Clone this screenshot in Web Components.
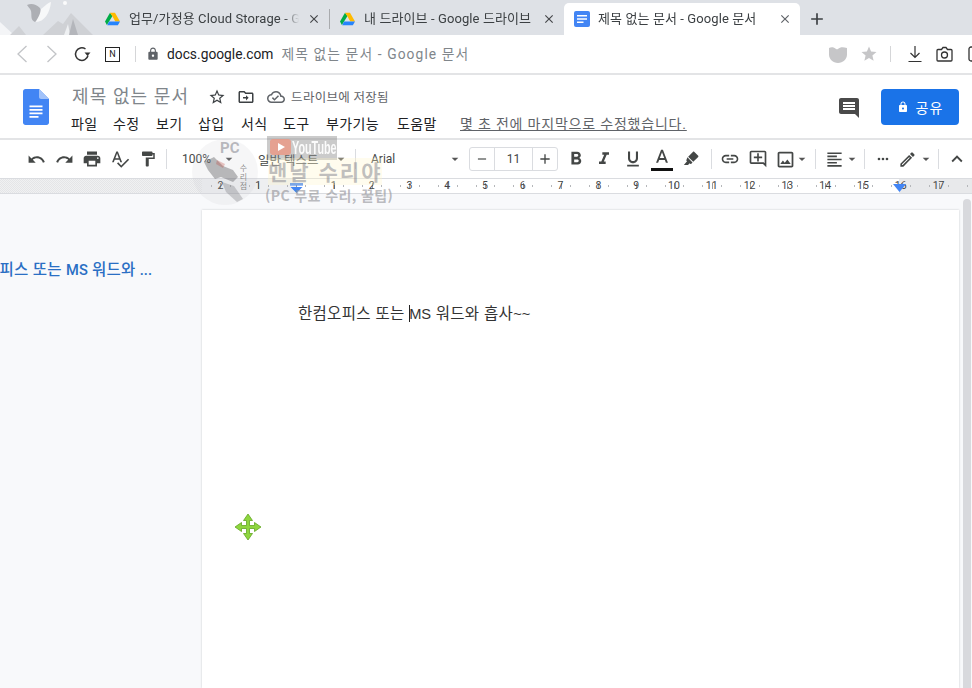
<!DOCTYPE html>
<html lang="ko">
<head>
<meta charset="utf-8">
<title>제목 없는 문서 - Google 문서</title>
<style>
  html, body { margin: 0; height: 100%; overflow: hidden; background: #fff; }
  body { font-family: Roboto, "Noto Sans CJK KR", sans-serif; display: flex; flex-direction: column; width: 972px; height: 688px; position: relative; }
</style>
</head>
<body>
<tab-strip></tab-strip>
<address-bar></address-bar>
<docs-header></docs-header>
<docs-toolbar></docs-toolbar>
<docs-ruler></docs-ruler>
<docs-body></docs-body>
<pc-watermark></pc-watermark>

<script>
// icon paths (24x24 box)------------------------------------
const ICONS = {
  undo: 'M12.5 8c-2.65 0-5.05.99-6.9 2.6L2 7v9h9l-3.62-3.62c1.39-1.16 3.16-1.88 5.12-1.88 3.54 0 6.55 2.31 7.6 5.5l2.37-.78C21.08 11.03 17.15 8 12.5 8z',
  redo: 'M18.4 10.6C16.55 8.99 14.15 8 11.5 8c-4.65 0-8.58 3.03-9.96 7.22L3.9 16c1.05-3.19 4.05-5.5 7.6-5.5 1.95 0 3.73.72 5.12 1.88L13 16h9V7l-3.6 3.6z',
  print: 'M19 8H5c-1.66 0-3 1.34-3 3v6h4v4h12v-4h4v-6c0-1.66-1.34-3-3-3zm-3 11H8v-5h8v5zm3-7c-.55 0-1-.45-1-1s.45-1 1-1 1 .45 1 1-.45 1-1 1zm-1-9H6v4h12V3z',
  spell: 'M12.45 16h2.09L9.43 3H7.57L2.46 16h2.09l1.12-3h5.64l1.14 3zm-6.02-5L8.5 5.48 10.57 11H6.43zm15.16.59l-8.09 8.09L9.83 16l-1.41 1.41 5.09 5.09L23 13l-1.41-1.41z',
  paint: 'M18 4V3c0-.55-.45-1-1-1H5c-.55 0-1 .45-1 1v4c0 .55.45 1 1 1h12c.55 0 1-.45 1-1V6h1v4H9v11c0 .55.45 1 1 1h2c.55 0 1-.45 1-1v-9h8V4h-3z',
  caret: 'M7 10l5 5 5-5z',
  bold: 'M15.6 10.79c.97-.67 1.65-1.77 1.65-2.79 0-2.26-1.75-4-4-4H7v14h7.04c2.09 0 3.71-1.7 3.71-3.79 0-1.52-.86-2.82-2.15-3.42zM10 6.5h3c.83 0 1.5.67 1.5 1.5s-.67 1.5-1.5 1.5h-3v-3zm3.5 9H10v-3h3.5c.83 0 1.5.67 1.5 1.5s-.67 1.5-1.5 1.5z',
  italic: 'M10 4v3h2.21l-3.42 8H6v3h8v-3h-2.21l3.42-8H18V4z',
  underline: 'M12 17c3.31 0 6-2.69 6-6V3h-2.5v8c0 1.93-1.57 3.5-3.5 3.5S8.5 12.93 8.5 11V3H6v8c0 3.31 2.69 6 6 6zm-7 2v2h14v-2H5z',
  textcolor: 'M11 2L5.5 16h2.25l1.12-3h6.25l1.12 3h2.25L13 2h-2zm-1.38 9L12 4.67 14.38 11H9.62z',
  marker: 'M16.200 2.400l5.400 5.400c.4.4.4 1 0 1.400l-6.600 6.600-6.800-6.800 6.600-6.600c.4-.4 1-.4 1.400 0zM7.200 9.800l6.800 6.800-1.600 1.600c-.4.4-1 .4-1.400 0l-.7-.7-2.300 2.500H2.500l4.200-5-.7-.7c-.4-.4-.4-1 0-1.400z',
  link: 'M3.9 12c0-1.71 1.39-3.1 3.1-3.1h4V7H7c-2.76 0-5 2.24-5 5s2.24 5 5 5h4v-1.9H7c-1.71 0-3.1-1.39-3.1-3.1zM8 13h8v-2H8v2zm9-6h-4v1.9h4c1.71 0 3.1 1.39 3.1 3.1s-1.39 3.1-3.1 3.1h-4V17h4c2.76 0 5-2.24 5-5s-2.24-5-5-5z',
  addcomment: 'M22 4c0-1.1-.9-2-2-2H4c-1.1 0-2 .9-2 2v12c0 1.1.9 2 2 2h14l4 4V4zm-2 13.17L18.83 16H4V4h16v13.17zM13 5h-2v4H7v2h4v4h2v-4h4V9h-4z',
  image: 'M19 5v14H5V5h14m0-2H5c-1.1 0-2 .9-2 2v14c0 1.1.9 2 2 2h14c1.1 0 2-.9 2-2V5c0-1.1-.9-2-2-2zm-4.86 8.86l-3 3.87L9 13.14 6 17h12l-3.86-5.14z',
  align: 'M15 15H3v2h12v-2zm0-8H3v2h12V7zM3 13h18v-2H3v2zm0 8h18v-2H3v2zM3 3v2h18V3H3z',
  more: 'M6 10a2 2 0 1 0 0 4 2 2 0 0 0 0-4zm6 0a2 2 0 1 0 0 4 2 2 0 0 0 0-4zm6 0a2 2 0 1 0 0 4 2 2 0 0 0 0-4z',
  pen: 'M14.06 9.02l.92.92L5.92 19H5v-.92l9.06-9.06M17.66 3c-.25 0-.51.1-.7.29l-1.83 1.83 3.75 3.75 1.83-1.83c.39-.39.39-1.02 0-1.41l-2.34-2.34c-.2-.2-.45-.29-.71-.29zm-3.6 3.19L3 17.25V21h3.75L17.81 9.94l-3.75-3.75z',
  less: 'M12 8l-6 6 1.41 1.41L12 10.83l4.59 4.58L18 14z',
  minus: 'M5 11h14v2H5z',
  plus: 'M19 13h-6v6h-2v-6H5v-2h6V5h2v6h6v2z',
  star: 'M22 9.24l-7.19-.62L12 2 9.19 8.63 2 9.24l5.46 4.73L5.82 21 12 17.27 18.18 21l-1.63-7.03L22 9.24zM12 15.4l-3.76 2.27 1-4.28-3.32-2.88 4.38-.38L12 6.1l1.71 4.04 4.38.38-3.32 2.88 1 4.28L12 15.4z',
  starfill: 'M12 17.27L18.18 21l-1.64-7.03L22 9.24l-7.19-.61L12 2 9.19 8.63 2 9.24l5.46 4.73L5.82 21z',
  folder: 'M20 6h-8l-2-2H4c-1.1 0-2 .9-2 2v12c0 1.1.9 2 2 2h16c1.1 0 2-.9 2-2V8c0-1.1-.9-2-2-2zm0 12H4V6h5.17l2 2H20v10zM12 9.500l3.500 3.500-3.500 3.500v-2.500H8v-2h4z',
  cloud: 'M19.35 10.04C18.67 6.59 15.64 4 12 4 9.11 4 6.6 5.64 5.35 8.04 2.34 8.36 0 10.91 0 14c0 3.31 2.69 6 6 6h13c2.76 0 5-2.24 5-5 0-2.64-2.05-4.78-4.65-4.96zM19 18H6c-2.21 0-4-1.79-4-4 0-2.05 1.53-3.76 3.56-3.97l1.07-.11.5-.95C8.08 7.14 9.94 6 12 6c2.62 0 4.88 1.86 5.39 4.43l.3 1.5 1.53.11c1.56.1 2.78 1.41 2.78 2.96 0 1.65-1.35 3-3 3zm-9-3.820l-2.090-2.090L6.500 13.500 10 17l6.010-6.010-1.410-1.410z',
  comment: 'M21.99 4c0-1.1-.89-2-1.99-2H4c-1.1 0-2 .9-2 2v12c0 1.1.9 2 2 2h14l4 4-.01-18zM18 14H6v-2h12v2zm0-3H6V9h12v2zm0-3H6V6h12v2z',
  lock: 'M18 8h-1V6c0-2.76-2.24-5-5-5S7 3.24 7 6v2H6c-1.1 0-2 .9-2 2v10c0 1.1.9 2 2 2h12c1.1 0 2-.9 2-2V10c0-1.1-.9-2-2-2zm-6 9c-1.1 0-2-.9-2-2s.9-2 2-2 2 .9 2 2-.9 2-2 2zm3.100-9H8.900V6c0-1.710 1.390-3.100 3.100-3.100 1.710 0 3.100 1.390 3.100 3.100v2z',
  close: 'M19 6.410L17.590 5 12 10.590 6.410 5 5 6.410 10.590 12 5 17.590 6.410 19 12 13.410 17.590 19 19 17.590 13.410 12z',
}

function svgIcon(name, size, color) {
  return `<svg width="${size}" height="${size}" viewBox="0 0 24 24" fill="${color}" style="display:block;flex:none"><path d="${ICONS[name]}"/></svg>`
}

const driveLogo = `<svg width="15" height="14" viewBox="0 0 24 22" style="display:block;flex:none">
  <path fill="#00ac47" d="M8 1L0 15l3 5.500L12 6z"/>
  <path fill="#ffba00" d="M8 1h8l8 14h-7.500L12 7z"/>
  <path fill="#2684fc" d="M24 15l-3.500 6H3.500l3-6z"/>
</svg>`

// abas do navegador--------------------------------------------
class BrowserTab extends HTMLElement {
  constructor() {
    super()
    const shadow = this.attachShadow({mode:'open'})
    const active = this.hasAttribute('active')
    const kind = this.getAttribute('kind')
    const fav = kind === 'doc'
      ? `<svg width="16" height="16" viewBox="0 0 16 16" style="display:block;flex:none"><rect width="16" height="16" rx="2" fill="#4285f4"/><path fill="#fff" d="M3 4h10v1.600H3zM3 7.200h10v1.600H3zM3 10.400h6.500V12H3z"/></svg>`
      : driveLogo
    shadow.innerHTML = `
      <style>
        :host { display: flex; align-items: center; box-sizing: border-box; height: 32px; width: var(--w); padding-left: var(--pad); color: #3c4043; font-size: 13px; letter-spacing: .1px; }
        :host([active]) { background: #fff; border-radius: 5px 5px 0 0; }
        .t { flex: 1; min-width: 0; margin-left: var(--gap); padding-bottom: 3px; white-space: nowrap; overflow: hidden; -webkit-mask-image: linear-gradient(to left, transparent 0, #000 var(--fade, 14px)); }
        .x { width: 30px; display: flex; justify-content: center; flex: none; }
      </style>
      ${fav}
      <div class="t"><slot></slot></div>
      <div class="x">${svgIcon('close', 14, active ? '#5f6368' : '#45474a')}</div>`
  }
}
customElements.define('browser-tab', BrowserTab)

class TabStrip extends HTMLElement {
  constructor() {
    super()
    const shadow = this.attachShadow({mode:'open'})
    shadow.innerHTML = `
      <style>
        :host { display: flex; align-items: flex-end; height: 35px; flex: none; background: #dee1e6; position: relative; overflow: hidden; }
        .art { position: absolute; left: 0; top: 0; }
        .tabs { display: flex; align-items: flex-end; margin-left: 96px; position: relative; }
        .sep { width: 1px; height: 20px; background: #a9abae; align-self: center; }
        .plus { margin: 0 0 0 7px; align-self: center; }
      </style>
      <svg class="art" width="100" height="35" viewBox="0 0 100 35">
        <path fill="#f4f5f7" d="M0 22L14 35H0z"/>
        <path fill="#cfd1d5" d="M10 35L19 26L26 35zM43 35L58 21L63 24L71 13L93 35z"/>
        <path fill="#eef0f2" d="M64 35L68 24L70 35z"/>
        <path fill="#b4b6bb" d="M69 35L73 19L78 35z"/>
        <path fill="#f7f8f9" d="M36 22C44 22 50 13 51 2C47 3 44 7 41 9L37 18z"/>
        <path fill="#adafb4" d="M27 5C31 3 36 4 40 8C42 11 38 19 35 22C30 20 32 15 31 11C30 8 28 7 27 5z"/>
        <circle cx="65" cy="3" r="2" fill="#fbfbfc"/>
      </svg>
      <div class="tabs">
        <browser-tab kind="drive" style="--w:233px;--pad:9px;--gap:9px">업무/가정용 Cloud Storage - Google</browser-tab>
        <div class="sep"></div>
        <browser-tab kind="drive" style="--w:234px;--pad:10px;--gap:9px;--fade:1px">내 드라이브 - Google 드라이브</browser-tab>
        <browser-tab active kind="doc" style="--w:236px;--pad:10px;--gap:8px">제목 없는 문서 - Google 문서</browser-tab>
        <div class="plus">${svgIcon('plus', 20, '#3c4043')}</div>
      </div>`
  }
}
customElements.define('tab-strip', TabStrip)

// barra de endereco--------------------------------------------
class AddressBar extends HTMLElement {
  constructor() {
    super()
    const shadow = this.attachShadow({mode:'open'})
    shadow.innerHTML = `
      <style>
        :host { display: flex; align-items: center; flex: none; height: 40px; box-sizing: border-box; border-bottom: 2px solid #e3e4e6; padding-left: 16px; background: #fff; overflow: hidden; }
        svg { display: block; flex: none; }
        .sep { width: 1px; height: 16px; background: #d5d6d8; flex: none; }
        .url { font-size: 13.800px; white-space: nowrap; margin: 0 0 2px 7px; color: #80868b; letter-spacing: 1.100px; }
        .url b { font-weight: 400; color: #202124; margin-right: 8px; letter-spacing: 0; }
        .n { box-sizing: border-box; width: 15px; height: 15px; border: 1px solid #222; font: 400 9px/13px Roboto, sans-serif; text-align: center; color: #222; flex: none; }
        .right { margin-left: auto; display: flex; align-items: center; margin-right: -10px; }
      </style>
      <svg width="12" height="18" viewBox="0 0 12 18" fill="none" stroke="#c2c4c7" stroke-width="1.300"><path d="M10.500 1L2 9l8.500 8"/></svg>
      <svg style="margin-left:18px" width="12" height="18" viewBox="0 0 12 18" fill="none" stroke="#c2c4c7" stroke-width="1.300"><path d="M1.500 1L10 9l-8.500 8"/></svg>
      <svg style="margin-left:15px" width="18" height="18" viewBox="0 0 18 18" fill="none"><path stroke="#333" stroke-width="1.500" d="M15 10.500A6.300 6.300 0 1 1 12.500 4"/><path fill="#333" d="M11.500 7.500h6l-3 3.500z"/></svg>
      <div class="n" style="margin-left:14px">N</div>
      <div class="sep" style="margin-left:15px"></div>
      <div style="margin-left:10px">${svgIcon('lock', 14, '#5f6368')}</div>
      <div class="url"><b>docs.google.com</b>제목 없는 문서 - Google 문서</div>
      <div class="right">
        <svg width="18" height="17" viewBox="0 0 18 17"><path fill="#c6c6c8" d="M0 2c2-1 5-1 7 1 .6.4 1.400.4 2 0 2-2 5-2 9-1v6.500c0 4.500-4 8.500-9 8.500s-9-4-9-8.500z"/></svg>
        <div style="margin-left:13px;margin-right:12px">${svgIcon('starfill', 18, '#c6c6c8')}</div>
        <div class="sep"></div>
        <svg style="margin-left:16px" width="16" height="18" viewBox="0 0 16 18" fill="none" stroke="#333" stroke-width="1.200"><path d="M8 1v11M3.500 8L8 12.500 12.500 8M1.500 16.500h13"/></svg>
        <svg style="margin-left:13px" width="17" height="16" viewBox="0 0 17 16" fill="none" stroke="#333" stroke-width="1.300"><path d="M2 3.500h3.500L7 1.500h3l1.500 2H15c.6 0 1 .4 1 1V14c0 .6-.4 1-1 1H2c-.6 0-1-.4-1-1V4.500c0-.6.4-1 1-1z"/><circle cx="8.500" cy="9" r="3"/></svg>
        <svg style="margin-left:15px" width="14" height="16" viewBox="0 0 14 16" fill="none" stroke="#333" stroke-width="1.300"><rect x="1" y="1" width="12" height="14" rx="2"/></svg>
      </div>`
  }
}
customElements.define('address-bar', AddressBar)

// cabecalho do docs--------------------------------------------
class MenuItem extends HTMLElement {
  constructor() {
    super()
    const shadow = this.attachShadow({mode:'open'})
    shadow.innerHTML = `
      <style>
        :host { display: block; font-size: 14px; letter-spacing: .4px; color: #202124; white-space: nowrap; }
      </style>
      <slot></slot>`
  }
}
customElements.define('menu-item', MenuItem)

class DocsHeader extends HTMLElement {
  constructor() {
    super()
    const shadow = this.attachShadow({mode:'open'})
    shadow.innerHTML = `
      <style>
        :host { display: flex; flex: none; height: 65px; box-sizing: border-box; border-bottom: 2px solid #e3e4e6; background: #fff; }
        .logo { margin: 14px 0 0 23px; flex: none; }
        .col { margin-left: 23px; flex: 1; min-width: 0; display: flex; flex-direction: column; }
        .top { display: flex; align-items: center; height: 24px; margin-top: 8px; }
        .title { font-size: 18px; color: #80868b; letter-spacing: 1.100px; white-space: nowrap; }
        .ic { margin-top: 3px; }
        .saved { font-size: 12.500px; color: #5f6368; margin: 3px 0 0 6px; letter-spacing: .3px; white-space: nowrap; }
        .menus { display: flex; align-items: center; margin: 6px 0 0 -1px; height: 20px; }
        .last { font-size: 14px; letter-spacing: .8px; color: #5f6368; text-decoration: underline; white-space: nowrap; }
        .share { flex: none; margin: 14px 13px 0 0; width: 78px; height: 36px; background: #1a73e8; color: #fff; border-radius: 4px; display: flex; align-items: center; justify-content: center; gap: 7px; font-size: 14px; letter-spacing: 1px; }
        .cm { flex: none; margin: 21px 20px 0 0; }
      </style>
      <svg class="logo" width="26" height="36" viewBox="0 0 26 36">
        <path fill="#4285f4" d="M16 0H2.500C1.100 0 0 1.100 0 2.500v31C0 34.900 1.100 36 2.500 36h21c1.400 0 2.500-1.100 2.500-2.500V10z"/>
        <path fill="#a1c2fa" d="M16 0l10 10H18c-1.100 0-2-.9-2-2z"/>
        <path fill="#fff" d="M6.500 16.500h13v1.700h-13zM6.500 20h13v1.700h-13zM6.500 23.500h13v1.700h-13zM6.500 27h9v1.700h-9z"/>
      </svg>
      <div class="col">
        <div class="top">
          <div class="title">제목 없는 문서</div>
          <div class="ic" style="margin-left:19px">${svgIcon('star', 18, '#3c4043')}</div>
          <div class="ic" style="margin-left:11px">${svgIcon('folder', 18, '#3c4043')}</div>
          <div class="ic" style="margin-left:12px">${svgIcon('cloud', 18, '#5f6368')}</div>
          <div class="saved">드라이브에 저장됨</div>
        </div>
        <div class="menus">
          <menu-item style="width:42px">파일</menu-item>
          <menu-item style="width:43px">수정</menu-item>
          <menu-item style="width:42px">보기</menu-item>
          <menu-item style="width:43px">삽입</menu-item>
          <menu-item style="width:42px">서식</menu-item>
          <menu-item style="width:43px">도구</menu-item>
          <menu-item style="width:71px">부가기능</menu-item>
          <menu-item style="width:63px">도움말</menu-item>
          <div class="last">몇 초 전에 마지막으로 수정했습니다.</div>
        </div>
      </div>
      <div class="cm">${svgIcon('comment', 24, '#4a4a4a')}</div>
      <div class="share">${svgIcon('lock', 12, '#fff')}<span>공유</span></div>`
  }
}
customElements.define('docs-header', DocsHeader)

// barra de ferramentas-----------------------------------------
class ToolBtn extends HTMLElement {
  constructor() {
    super()
    const shadow = this.attachShadow({mode:'open'})
    const size = this.getAttribute('size') || 20
    const color = this.getAttribute('color') || '#444746'
    shadow.innerHTML = `
      <style>
        :host { display: flex; align-items: center; justify-content: center; flex: none; width: 28px; height: 24px; position: relative; }
      </style>
      ${svgIcon(this.getAttribute('icon'), size, color)}<slot></slot>`
  }
}
customElements.define('tool-btn', ToolBtn)

class DocsToolbar extends HTMLElement {
  constructor() {
    super()
    const shadow = this.attachShadow({mode:'open'})
    const sep = (l, r) => `<div class="sep" style="margin:0 ${r}px 0 ${l}px"></div>`
    const caret = (w) => `<div class="caret" style="width:${w}px">${svgIcon('caret', 16, '#555')}</div>`
    const tight = svgIcon('caret', 16, '#555').replace('display:block', 'display:block;margin:0 -4px')
    shadow.innerHTML = `
      <style>
        :host { display: flex; align-items: center; flex: none; height: 39px; box-sizing: border-box; padding-left: 22px; background: #fff; border-bottom: 1px solid #dadce0; color: #444746; font-size: 12px; overflow: hidden; }
        .sep { width: 1px; height: 20px; background: #dadce0; flex: none; }
        .caret { display: flex; justify-content: center; flex: none; }
        .lbl { flex: none; white-space: nowrap; }
        .size { display: flex; flex: none; box-sizing: border-box; width: 89px; height: 24px; border: 1px solid #dadce0; border-radius: 3px; align-items: center; margin-left: 6px; }
        .size div { display: flex; align-items: center; justify-content: center; height: 100%; }
        .size .n { flex: 1; border-left: 1px solid #dadce0; border-right: 1px solid #dadce0; font-size: 12px; }
        .size .b { width: 24px; flex: none; }
        .bar { position: absolute; left: 3px; right: 3px; bottom: 0; height: 3px; background: #111; }
      </style>
      <tool-btn icon="undo" size="19"></tool-btn>
      <tool-btn icon="redo" size="19"></tool-btn>
      <tool-btn icon="print" size="20"></tool-btn>
      <tool-btn icon="spell" size="20"></tool-btn>
      <tool-btn icon="paint" size="18"></tool-btn>
      ${sep(4, 15)}
      <div class="lbl" style="width:39px">100%</div>
      ${caret(16)}
      <div class="lbl" style="width:75px;margin-left:21px;font-size:12.500px">일반 텍스트</div>
      ${caret(16)}
      ${sep(6, 15)}
      <div class="lbl" style="width:76px">Arial</div>
      ${caret(16)}
      <div class="size">
        <div class="b">${svgIcon('minus', 14, '#444746')}</div>
        <div class="n">11</div>
        <div class="b">${svgIcon('plus', 16, '#444746')}</div>
      </div>
      <tool-btn icon="bold" size="22" style="margin-left:4px"></tool-btn>
      <tool-btn icon="italic" size="20"></tool-btn>
      <tool-btn icon="underline" size="20" style="margin-left:1px"></tool-btn>
      <tool-btn icon="textcolor" size="22" style="margin-left:1px"><div class="bar"></div></tool-btn>
      <tool-btn icon="marker" size="18" style="margin-left:1px"></tool-btn>
      ${sep(6, 4)}
      <tool-btn icon="link" size="20"></tool-btn>
      <tool-btn icon="addcomment" size="20"></tool-btn>
      <tool-btn icon="image" size="21" style="margin-left:-1px"></tool-btn>
      <div class="caret" style="width:8px;margin-left:-1px;overflow:visible">${tight}</div>
      ${sep(9, 4)}
      <tool-btn icon="align" size="19"></tool-btn>
      <div class="caret" style="width:8px;overflow:visible">${tight}</div>
      ${sep(8, 4)}
      <tool-btn icon="more" size="16"></tool-btn>
      <tool-btn icon="pen" size="19" style="margin-left:-4px;margin-right:-1px"></tool-btn>
      ${caret(12)}
      ${sep(6, 4)}
      <tool-btn icon="less" size="22"></tool-btn>`
  }
}
customElements.define('docs-toolbar', DocsToolbar)

// regua----------------------------------------------------------
class DocsRuler extends HTMLElement {
  constructor() {
    super()
    const shadow = this.attachShadow({mode:'open'})
    const cm = 37.8
    let cells = ''
    for (let i = -2; i <= 17; i++) {
      if (i === 0) { cells += `<div class="c"></div>`; continue }
      cells += `<div class="c"><span>${Math.abs(i)}</span></div>`
    }
    shadow.innerHTML = `
      <style>
        :host { display: block; flex: none; height: 14px; position: relative; overflow: hidden; background: #fff; border-bottom: 1px solid #dadce0; font-size: 10.500px; color: #444; }
        .bands { position: absolute; inset: 0; display: flex; }
        .out { width: 202px; flex: none; background: repeating-conic-gradient(#e4e5e7 0 25%, #f0f1f2 0 50%) 0 0 / 2px 2px; }
        .margin { width: 94px; flex: none; background: #eeeff1; }
        .page { width: 603px; flex: none; background: #fff; }
        .rest { flex: 1; background: #e8e9eb; }
        .row { position: relative; display: flex; height: 14px; margin-left: ${296 - cm * 2 - cm / 2}px;
               background:
                 repeating-linear-gradient(to right, transparent 0, transparent 18.4px, #9a9c9f 18.4px, #9a9c9f 19.4px, transparent 19.4px, transparent 37.8px) 0 4px / 100% 6px no-repeat,
                 repeating-linear-gradient(to right, transparent 0, transparent 8.950px, #b5b7ba 8.950px, #b5b7ba 9.950px, transparent 9.950px, transparent 18.900px) 0 6px / 100% 2px no-repeat; }
        .c { width: ${cm}px; flex: none; text-align: center; line-height: 14px; position: relative; }
        .tri { position: absolute; left: 290px; top: 4px; }
        .tri2 { position: absolute; left: 893px; top: 5px; }
      </style>
      <div class="bands">
        <div class="out"></div><div class="margin"></div><div class="page"></div><div class="rest"></div>
      </div>
      <div class="row">${cells}</div>
      <svg class="tri" width="13" height="10" viewBox="0 0 13 10"><path fill="#4285f4" d="M0 0h13v2.500H0zM.5 4h12L6.500 10z"/></svg>
      <svg class="tri2" width="13" height="8" viewBox="0 0 13 8"><path fill="#4285f4" d="M0 0h13L6.500 8z"/></svg>`
  }
}
customElements.define('docs-ruler', DocsRuler)

// corpo: outline, pagina e scrollbar-----------------------------
class DocsBody extends HTMLElement {
  constructor() {
    super()
    const shadow = this.attachShadow({mode:'open'})
    shadow.innerHTML = `
      <style>
        :host { display: flex; flex: 1; min-height: 0; background: #f8f9fb; position: relative; overflow: hidden; }
        .side { width: 202px; flex: none; box-sizing: border-box; padding: 66px 0 0 0; }
        .outline { width: 152px; overflow: hidden; display: flex; justify-content: flex-end; font-size: 15.500px; letter-spacing: .3px; font-weight: 500; color: #2a6fc4; white-space: nowrap; line-height: 20px; }
        .outline i, .page i { font-style: normal; font-size: 14.670px; letter-spacing: 0; }
        .page { flex: none; width: 757px; margin-top: 16px; background: #fff; box-shadow: 0 0 2px rgba(60,64,67,.25); box-sizing: border-box; padding: 93px 0 0 96px; font-family: "Liberation Sans", "Noto Sans CJK KR", sans-serif; font-size: 15.500px; letter-spacing: .3px; color: #333; line-height: 22px; white-space: nowrap; }
        .cursor { display: inline-block; width: 1px; height: 17px; background: #222; vertical-align: -3px; margin: 0 -1px 0 0; }
        .scroll { position: absolute; right: 1px; top: 5px; bottom: -10px; width: 8px; border-radius: 4px; background: #d8d9dd; }
        .move { position: absolute; left: 234px; top: 319px; }
      </style>
      <div class="side"><div class="outline"><span>한컴오피스 또는 <i>MS</i> 워드와 <i>...</i></span></div></div>
      <div class="page">한컴오피스 또는 <span class="cursor"></span><i>MS</i> 워드와 흡사<i>~~</i></div>
      <div class="scroll"></div>
      <svg class="move" width="28" height="28" viewBox="0 0 28 28">
        <path fill="#8ed63e" stroke="#62a522" stroke-width=".8" d="M14 1l4.500 6.500h-3v5h5v-3L27 14l-6.500 4.500v-3h-5v5h3L14 27l-4.500-6.500h3v-5h-5v3L1 14l6.500-4.500v3h5v-5h-3z"/>
      </svg>`
  }
}
customElements.define('docs-body', DocsBody)

// marca d'agua sobreposta----------------------------------------
class PcWatermark extends HTMLElement {
  constructor() {
    super()
    const shadow = this.attachShadow({mode:'open'})
    shadow.innerHTML = `
      <style>
        :host { position: absolute; left: 190px; top: 134px; width: 220px; height: 74px; pointer-events: none; font-family: "Noto Sans CJK KR", Roboto, sans-serif; }
        .disc { position: absolute; left: 2px; top: 4px; }
        .pc { position: absolute; left: 30px; top: 5px; font: 700 15px Roboto, sans-serif; color: rgba(120,120,130,.5); }
        .vert { position: absolute; left: 48px; top: 30px; writing-mode: vertical-rl; font-size: 8px; line-height: 10px; letter-spacing: 1px; color: rgba(90,90,90,.7); }
        .yt { position: absolute; left: 77px; top: 2px; width: 70px; height: 24px; background: rgba(130,130,130,.42); box-sizing: border-box; }
        .yt i { position: absolute; left: 3px; top: 3px; width: 21px; height: 16px; background: rgba(235,150,130,.8); border-radius: 3px; }
        .yt i::after { content: ""; position: absolute; left: 8px; top: 4px; border-left: 7px solid #fff; border-top: 4px solid transparent; border-bottom: 4px solid transparent; }
        .yt span { position: absolute; left: 25px; top: 0; color: rgba(255,255,255,.92); font: 700 18px/24px "Liberation Sans", sans-serif; transform: scaleX(.6); transform-origin: 0 50%; white-space: nowrap; }
        .name { position: absolute; left: 78px; top: 24px; font-size: 21px; font-weight: 700; color: rgba(130,130,140,.5); letter-spacing: 2px; white-space: nowrap; background: rgba(255,245,200,.3); line-height: 27px; }
        .sub { position: absolute; left: 75px; top: 52px; font-size: 14px; font-weight: 700; color: rgba(150,150,155,.65); letter-spacing: .4px; white-space: nowrap; line-height: 18px; }
      </style>
      <svg class="disc" width="68" height="68" viewBox="0 0 68 68">
        <circle cx="33" cy="34" r="33" fill="rgba(200,200,205,.16)"/>
        <path fill="rgba(95,95,100,.42)" d="M12 24l10-5 9 9 10 4 5 7-5 5-12-5-6 2-7-9z"/>
        <path fill="rgba(120,120,125,.34)" d="M30 44l12 4 9 13-6 3-11-10z"/>
        <path fill="rgba(190,70,60,.3)" d="M25 22l8 4-2 4-7-4z"/>
      </svg>
      <div class="pc">PC</div>
      <div class="vert">수리점</div>
      <div class="yt"><i></i><span>YouTube</span></div>
      <div class="name">맨날 수리야</div>
      <div class="sub">(PC 무료 수리, 꿀팁)</div>`
  }
}
customElements.define('pc-watermark', PcWatermark)
</script>
</body>
</html>
